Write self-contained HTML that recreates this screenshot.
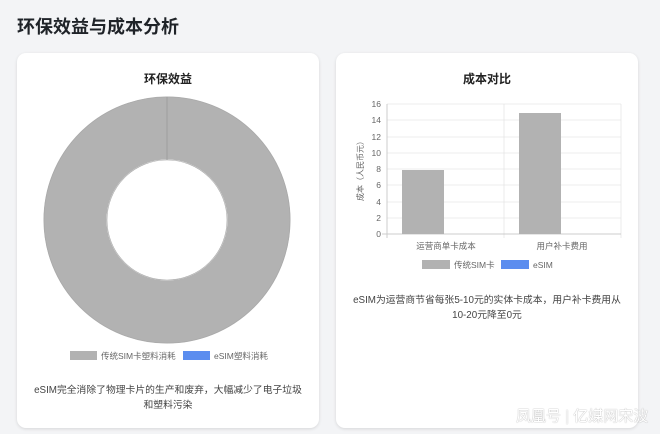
<!DOCTYPE html>
<html><head><meta charset="utf-8"><style>
body{margin:0;width:660px;height:434px;background:#f3f4f6;font-family:"Liberation Sans","Noto Sans CJK SC",sans-serif;position:relative;overflow:hidden}
.t{position:absolute;left:17px;top:13px;font-size:18px;font-weight:bold;color:#1f2328}
.card{position:absolute;top:53px;width:302px;height:375px;background:#fff;border-radius:9px;box-shadow:0 1px 3px rgba(0,0,0,.12)}
.h{position:absolute;width:100%;text-align:center;top:17px;font-size:12px;font-weight:bold;color:#222}
.p{position:absolute;width:100%;text-align:center;font-size:9.8px;color:#444;line-height:15px}
svg{position:absolute;left:0;top:0}
</style></head><body>
<div class="t">环保效益与成本分析</div>
<div class="card" style="left:17px">
<div class="h">环保效益</div>
<svg width="302" height="375">
<circle cx="150" cy="167" r="92" fill="none" stroke="#b2b2b2" stroke-width="63"/>
<circle cx="150" cy="167" r="123" fill="none" stroke="#a8a8a8" stroke-width="0.6"/>
<circle cx="150" cy="167" r="60" fill="none" stroke="#a8a8a8" stroke-width="0.6"/>
<line x1="150" y1="44" x2="150" y2="107" stroke="#999" stroke-width="0.8"/>
<rect x="53" y="298" width="27" height="9" fill="#b2b2b2"/>
<text x="84" y="306" font-size="8.5" fill="#666">传统SIM卡塑料消耗</text>
<rect x="166" y="298" width="27" height="9" fill="#5b8def"/>
<text x="197" y="306" font-size="8.5" fill="#666">eSIM塑料消耗</text>
</svg>
<div class="p" style="top:330px">eSIM完全消除了物理卡片的生产和废弃，大幅减少了电子垃圾<br>和塑料污染</div>
</div>
<div class="card" style="left:336px">
<div class="h">成本对比</div>
<svg width="303" height="375" font-size="8.5" fill="#666">
<g stroke="#e6e6e6" stroke-width="0.8">
<line x1="51" y1="51" x2="285" y2="51"/><line x1="51" y1="67" x2="285" y2="67"/><line x1="51" y1="84" x2="285" y2="84"/><line x1="51" y1="100" x2="285" y2="100"/><line x1="51" y1="116" x2="285" y2="116"/><line x1="51" y1="132" x2="285" y2="132"/><line x1="51" y1="149" x2="285" y2="149"/><line x1="51" y1="165" x2="285" y2="165"/>
<line x1="168" y1="51" x2="168" y2="185"/><line x1="285" y1="51" x2="285" y2="185"/>
</g>
<line x1="51" y1="51" x2="51" y2="185" stroke="#ccc"/><line x1="46" y1="181" x2="285" y2="181" stroke="#ccc"/>
<g text-anchor="end"><text x="45" y="54">16</text><text x="45" y="70">14</text><text x="45" y="87">12</text><text x="45" y="103">10</text><text x="45" y="119">8</text><text x="45" y="135">6</text><text x="45" y="152">4</text><text x="45" y="168">2</text><text x="45" y="184">0</text></g>
<text transform="translate(27,116) rotate(-90)" text-anchor="middle" font-size="8">成本（人民币元）</text>
<rect x="66" y="117" width="42" height="64" fill="#b2b2b2"/>
<rect x="183" y="60" width="42" height="121" fill="#b2b2b2"/>
<text x="110" y="196" text-anchor="middle">运营商单卡成本</text>
<text x="226" y="196" text-anchor="middle">用户补卡费用</text>
<rect x="86" y="207" width="28" height="9" fill="#b2b2b2"/><text x="118" y="215">传统SIM卡</text>
<rect x="165" y="207" width="28" height="9" fill="#5b8def"/><text x="197" y="215">eSIM</text>
</svg>
<div class="p" style="top:240px">eSIM为运营商节省每张5-10元的实体卡成本，用户补卡费用从<br>10-20元降至0元</div>
</div>
<div style="position:absolute;left:516px;top:405px;font-size:15px;color:#fff;text-shadow:0 0 1px #888">凤凰号 | 亿媒网宋波</div>
</body></html>
